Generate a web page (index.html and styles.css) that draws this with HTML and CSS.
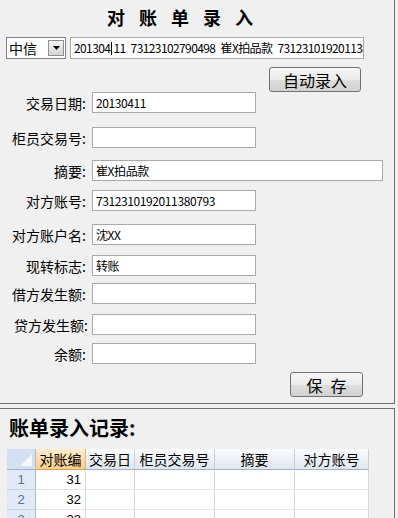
FILE: index.html
```html
<!DOCTYPE html>
<html lang="zh-CN">
<head>
    <meta charset="UTF-8">
    <title>对账单录入</title>
    <link rel="stylesheet" href="styles.css">
</head>
<body>
    <!-- Entry panel -->
    <div class="panel panel-entry">
        <h1 class="title">对账单录入</h1>

        <div class="source-row">
            <div class="combo">
                <span class="combo-text">中信</span>
                <span class="combo-drop">
                    <svg width="7" height="4" viewBox="0 0 7 4"><path d="M0 0H7L3.5 4Z" fill="#000"/></svg>
                </span>
            </div>
            <div class="field source-field">201304<span class="caret"></span>11 73123102790498 崔X拍品款 7312310192011380793</div>
        </div>

        <div class="auto-row">
            <button class="btn btn-auto">自动录入</button>
        </div>

        <div class="form">
            <div class="row"><label>交易日期:</label><div class="field">20130411</div></div>
            <div class="row"><label>柜员交易号:</label><div class="field"></div></div>
            <div class="row"><label>摘要:</label><div class="field field-wide">崔X拍品款</div></div>
            <div class="row"><label>对方账号:</label><div class="field">7312310192011380793</div></div>
            <div class="row"><label>对方账户名:</label><div class="field">沈XX</div></div>
            <div class="row"><label>现转标志:</label><div class="field">转账</div></div>
            <div class="row"><label>借方发生额:</label><div class="field"></div></div>
            <div class="row"><label class="shift">贷方发生额:</label><div class="field"></div></div>
            <div class="row"><label>余额:</label><div class="field"></div></div>
        </div>

        <div class="save-row">
            <button class="btn btn-save">保存</button>
        </div>
    </div>

    <!-- Records panel -->
    <div class="panel panel-records">
        <h2 class="records-title">账单录入记录:</h2>
        <table class="grid">
            <thead>
                <tr>
                    <th class="corner"><span class="corner-mark"></span></th>
                    <th class="active col-id">对账编</th>
                    <th class="col-date">交易日</th>
                    <th class="col-teller">柜员交易号</th>
                    <th class="col-memo">摘要</th>
                    <th class="col-acct">对方账号</th>
                </tr>
            </thead>
            <tbody>
                <tr><th class="rowhead">1</th><td class="num">31</td><td></td><td></td><td></td><td></td></tr>
                <tr><th class="rowhead">2</th><td class="num">32</td><td></td><td></td><td></td><td></td></tr>
                <tr><th class="rowhead">3</th><td class="num">33</td><td></td><td></td><td></td><td></td></tr>
            </tbody>
        </table>
    </div>
</body>
</html>
```

FILE: styles.css
```css
body {
    margin: 0;
    background: #f0f0f0;
    font-family: "Noto Sans CJK SC", "Liberation Sans", sans-serif;
    color: #000;
    width: 398px;
    height: 518px;
    overflow: hidden;
}
.panel {
    box-sizing: border-box;
    width: 395px;
    border-right: 1px solid #6f6f6f;
}
.panel-entry {
    height: 404px;
    border-bottom: 1px solid #6f6f6f;
}
.panel-records {
    margin-top: 4px;
    height: 110px;
    border-top: 1px solid #6f6f6f;
}
.title {
    margin: 0;
    padding: 7px 0 0 107px;
    font-size: 18px;
    line-height: 20px;
    font-weight: bold;
    letter-spacing: 14px;
}
.source-row {
    display: flex;
    margin-top: 10px;
    height: 22px;
}
.combo {
    box-sizing: border-box;
    display: flex;
    align-items: center;
    justify-content: space-between;
    margin-left: 6px;
    width: 60px;
    height: 22px;
    padding: 0 1px 0 2px;
    background: #fff;
    border: 1px solid #7f848c;
    font-size: 14px;
}
.combo-drop {
    box-sizing: border-box;
    display: flex;
    align-items: center;
    justify-content: center;
    width: 16px;
    height: 16px;
    border: 1px solid #8e8f8f;
    background: linear-gradient(#f4f4f4, #d4d4d4);
}
.field {
    box-sizing: border-box;
    width: 164px;
    height: 21px;
    padding: 0 3px;
    background: #fff;
    border: 1px solid #a9a9a9;
    font-size: 12px;
    line-height: 19px;
    letter-spacing: -0.4px;
    white-space: nowrap;
    overflow: hidden;
}
.source-field {
    margin-left: 4px;
    width: 294px;
    height: 22px;
    line-height: 20px;
    letter-spacing: -0.6px;
    word-spacing: 3px;
}
.caret {
    display: inline-block;
    width: 1px;
    height: 13px;
    margin: 0 1px;
    vertical-align: -2px;
    background: #000;
}
.field-wide {
    width: 291px;
}
.auto-row {
    display: flex;
    justify-content: flex-end;
    padding-right: 33px;
    margin-top: 8px;
}
.btn {
    box-sizing: border-box;
    border: 1px solid #707070;
    border-radius: 3px;
    background: linear-gradient(#f7f7f7, #ebebeb 50%, #dedede 51%, #d2d2d2);
    font-family: "Noto Sans CJK SC", sans-serif;
    font-size: 16px;
    color: #000;
    padding: 0;
    line-height: 20px;
}
.btn-auto {
    width: 92px;
    height: 25px;
}
.row {
    display: flex;
    align-items: center;
    height: 21px;
    margin-top: 10px;
}
.row:nth-child(1) { margin-top: 0; }
.row:nth-child(2) { margin-top: 14px; }
.row:nth-child(3) { margin-top: 12px; }
.row:nth-child(4) { margin-top: 9px; }
.row:nth-child(5) { margin-top: 13px; }
.row:nth-child(6) { margin-top: 10px; }
.row:nth-child(7) { margin-top: 7px; }
.row:nth-child(8) { margin-top: 10px; }
.row:nth-child(9) { margin-top: 8px; }
.row label {
    width: 86px;
    margin-right: 6px;
    text-align: right;
    font-size: 14px;
    white-space: nowrap;
}
.row label.shift {
    margin-right: 4px;
    width: 88px;
}
.save-row {
    display: flex;
    justify-content: flex-end;
    padding-right: 31px;
    margin-top: 8px;
}
.btn-save {
    width: 73px;
    height: 25px;
    letter-spacing: 8px;
    padding-left: 8px;
}
.records-title {
    margin: 7px 0 9px 9px;
    font-size: 20px;
    line-height: 24px;
    font-weight: bold;
}
.grid {
    margin-left: 7px;
    border-collapse: separate;
    border-spacing: 0;
    table-layout: fixed;
    font-size: 13px;
}
.grid th, .grid td {
    box-sizing: border-box;
    padding: 0;
    height: 20px;
    border-right: 1px solid #d5d9df;
    border-bottom: 1px solid #e2e5ea;
    background: #fff;
}
.grid thead th {
    height: 21px;
    font-weight: normal;
    font-size: 14px;
    background: linear-gradient(#fbfcfd, #dfe6ef);
    border-right: 1px solid #c5cedb;
    border-bottom: 1px solid #9eb1cc;
}
.grid thead th.active {
    background: linear-gradient(#fdeccb, #f9d08c);
    border-right-color: #e8b45e;
    border-bottom-color: #e0a23f;
}
.grid thead th.corner {
    position: relative;
    background: #d4e0f1;
    border-right-color: #a8b9d2;
}
.corner-mark {
    position: absolute;
    right: 3px;
    bottom: 3px;
    width: 0;
    height: 0;
    border-left: 12px solid transparent;
    border-bottom: 12px solid #f3f6fa;
}
.col-id { width: 50px; }
.col-date { width: 49px; }
.col-teller { width: 80px; }
.col-memo { width: 80px; }
.col-acct { width: 74px; }
.corner { width: 29px; }
.grid th.rowhead {
    font-weight: normal;
    font-family: "Liberation Sans", sans-serif;
    font-size: 13px;
    color: #5b6f8e;
    background: #e1e9f4;
    border-right: 1px solid #a8b9d2;
    border-bottom: 1px solid #c5d2e4;
}
.grid td.num {
    text-align: right;
    padding-right: 4px;
    font-family: "Liberation Sans", sans-serif;
}
```
